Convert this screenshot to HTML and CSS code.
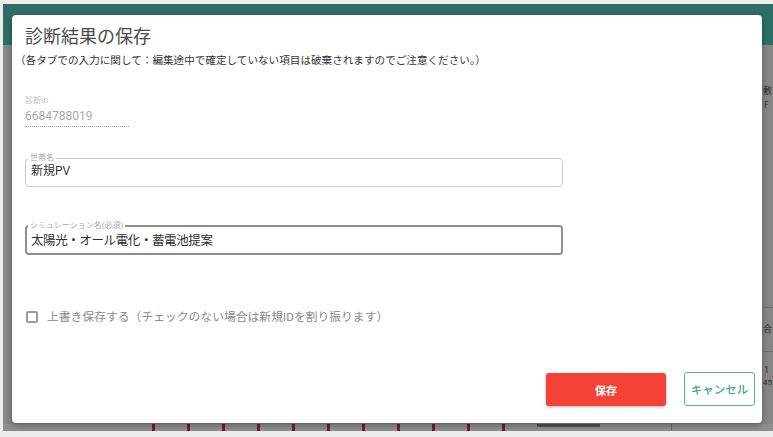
FILE: index.html
```html
<!DOCTYPE html>
<html lang="ja">
<head>
<meta charset="utf-8">
<title>診断結果の保存</title>
<link rel="stylesheet" href="styles.css">
</head>
<body>
<div class="screen">
  <div class="backdrop">
    <div class="appbar"></div>
    <div class="workspace">
      <div class="ws-body">
        <div class="ws-edge">
          <div class="edge-text edge-t1">敷</div>
          <div class="edge-text edge-t2">F</div>
          <div class="edge-rule edge-r1"></div>
          <div class="edge-text edge-t3">合</div>
          <div class="edge-rule edge-r2"></div>
          <div class="edge-text edge-t4">1</div>
          <div class="edge-text edge-t5">45</div>
        </div>
      </div>
      <div class="ws-strip"></div>
    </div>
  </div>

  <div class="dialog">
    <h2 class="dlg-title">診断結果の保存</h2>
    <p class="dlg-note">（各タブでの入力に関して：編集途中で確定していない項目は破棄されますのでご注意ください。）</p>

    <div class="id-block">
      <div class="id-label">診断ID</div>
      <div class="id-value">6684788019</div>
    </div>

    <fieldset class="field">
      <legend class="field-label">世帯名</legend>
      <div class="field-value">新規PV</div>
    </fieldset>

    <fieldset class="field field-active">
      <legend class="field-label">シミュレーション名(必須)</legend>
      <div class="field-value field-value-lg">太陽光・オール電化・蓄電池提案</div>
    </fieldset>

    <label class="check-row">
      <span class="check-box"></span>
      <span class="check-text">上書き保存する（チェックのない場合は新規IDを割り振ります）</span>
    </label>

    <div class="actions">
      <button class="btn-save" type="button">保存</button>
      <button class="btn-cancel" type="button">キャンセル</button>
    </div>
  </div>
</div>
</body>
</html>
```

FILE: styles.css
```css
html, body {
  margin: 0;
  padding: 0;
}

body {
  background: #ececec;
  font-family: "Roboto", "Noto Sans CJK JP", sans-serif;
}

.screen {
  position: relative;
  width: 773px;
  height: 437px;
  overflow: hidden;
}

/* ---------- dimmed page behind the dialog ---------- */
.backdrop {
  margin: 4px 0 0 3px;
  width: 770px;
  height: 427px;
  display: flex;
  flex-direction: column;
}

.appbar {
  height: 41px;
  background: #2f6e64;
}

.workspace {
  flex: 1;
  display: flex;
  flex-direction: column;
  background: #868686;
}

.ws-body {
  flex: 1;
  display: flex;
  justify-content: flex-end;
}

.ws-edge {
  width: 10px;
  display: flex;
  flex-direction: column;
  padding-top: 40px;
}

.edge-text {
  font-size: 9px;
  line-height: 12px;
  color: #2c2c2c;
  white-space: nowrap;
}

.edge-t2 { margin-top: 2px; margin-left: 1px; color: #3a3a3a; }

.edge-rule {
  height: 1px;
  background: #6f6f6f;
}

.edge-r1 { margin-top: 196px; }
.edge-t3 { margin-top: 15px; }
.edge-r2 { margin-top: 16px; }
.edge-t4 { margin-top: 12px; margin-left: 1px; }
.edge-t5 { margin-top: 1px; font-size: 8px; }

.ws-strip {
  height: 7px;
  background-color: #8e8e8e;
  background-image:
    repeating-linear-gradient(90deg, #7b1737 0 3px, transparent 3px 35px),
    linear-gradient(#525252, #525252),
    linear-gradient(#6e6e6e, #6e6e6e);
  background-size: 355px 100%, 63px 3px, 1px 100%;
  background-position: 149px 0, 534px 0, 668px 0;
  background-repeat: no-repeat;
}

/* ---------- dialog ---------- */
.dialog {
  position: absolute;
  left: 12px;
  top: 15px;
  width: 750px;
  height: 408px;
  box-sizing: border-box;
  padding: 10px 7px 17px 13px;
  background: #ffffff;
  border-radius: 4px;
  box-shadow: 0 2px 6px rgba(0, 0, 0, 0.35);
  display: flex;
  flex-direction: column;
  align-items: flex-start;
}

.dlg-title {
  margin: 0;
  font-size: 18px;
  line-height: 24px;
  font-weight: 400;
  color: #4a4a4a;
}

.dlg-note {
  margin: 5px 0 0 -10px;
  font-size: 10.6px;
  line-height: 14px;
  color: #333333;
  white-space: nowrap;
}

.id-block {
  margin-top: 28px;
  display: flex;
  flex-direction: column;
}

.id-label {
  font-size: 8px;
  line-height: 10px;
  color: #c2c2c2;
}

.id-value {
  margin-top: 2px;
  width: 104px;
  font-size: 12px;
  line-height: 16px;
  padding-bottom: 2px;
  color: #a9a9a9;
  border-bottom: 1px dotted #9a9a9a;
}

.field {
  margin: 27px 0 0 0;
  width: 538px;
  box-sizing: border-box;
  padding: 0 0 6px 2px;
  border: 1px solid #cacaca;
  border-radius: 4px;
  min-width: 0;
}

.field-label {
  padding: 0 2px;
  font-size: 8px;
  line-height: 8px;
  color: #a8a8a8;
}

.field-value {
  margin-left: 3px;
  font-size: 12px;
  line-height: 18px;
  color: #333333;
}

.field-active {
  margin-top: 35px;
  padding: 2px 0 3px 1px;
  border: 2px solid #8f8f8f;
}

.field-value-lg {
  font-size: 12.5px;
  letter-spacing: -0.4px;
  color: #2e2e2e;
}

.check-row {
  margin: 54px 0 0 1px;
  display: flex;
  align-items: center;
  height: 16px;
}

.check-box {
  width: 12px;
  height: 12px;
  box-sizing: border-box;
  border: 2px solid #9a9a9a;
  border-radius: 2px;
}

.check-text {
  margin-left: 9px;
  font-size: 11.8px;
  line-height: 16px;
  color: #8a8a8a;
}

.actions {
  margin-top: auto;
  align-self: stretch;
  display: flex;
  justify-content: flex-end;
  align-items: flex-end;
  gap: 18px;
}

.btn-save,
.btn-cancel {
  font-family: "Roboto", "Noto Sans CJK JP", sans-serif;
  border-radius: 3px;
  padding: 0;
  cursor: pointer;
}

.btn-save {
  width: 120px;
  height: 33px;
  border: none;
  background: #f44336;
  color: #ffffff;
  font-size: 11px;
  font-weight: 700;
  box-shadow: 0 1px 3px rgba(0, 0, 0, 0.3);
}

.btn-cancel {
  width: 71px;
  height: 34px;
  background: #ffffff;
  border: 1.5px solid #52b7aa;
  color: #3fa596;
  font-size: 11.5px;
  font-weight: 500;
}
```
